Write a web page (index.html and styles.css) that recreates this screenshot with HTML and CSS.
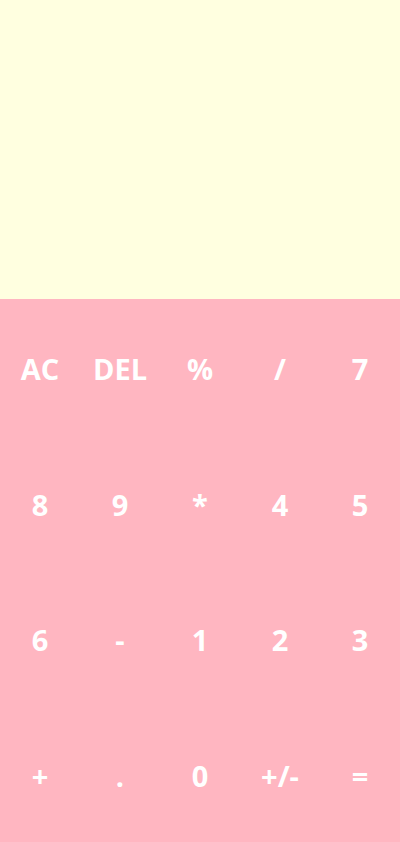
FILE: index.html
```html
<!DOCTYPE html>
<html>
<head>
<meta charset="utf-8">
<link rel="stylesheet" href="styles.css">
</head>
<body>
<div class="calc">
  <div class="display"></div>
  <div class="keys">
    <button class="key">AC</button>
    <button class="key">DEL</button>
    <button class="key">%</button>
    <button class="key">/</button>
    <button class="key">7</button>
    <button class="key">8</button>
    <button class="key">9</button>
    <button class="key">*</button>
    <button class="key">4</button>
    <button class="key">5</button>
    <button class="key">6</button>
    <button class="key">-</button>
    <button class="key">1</button>
    <button class="key">2</button>
    <button class="key">3</button>
    <button class="key">+</button>
    <button class="key">.</button>
    <button class="key">0</button>
    <button class="key">+/-</button>
    <button class="key">=</button>
  </div>
</div>
</body>
</html>
```
FILE: styles.css
```css
html, body {
  margin: 0;
  padding: 0;
  height: 100%;
}
.calc {
  display: flex;
  flex-direction: column;
  height: 842px;
  font-family: "Open Sans", "Noto Sans", sans-serif;
}
.display {
  height: 299px;
  background: #ffffe0;
}
.keys {
  flex: 1;
  display: grid;
  grid-template-columns: repeat(5, 1fr);
  grid-template-rows: repeat(4, 1fr);
  background: #ffb6c1;
}
.key {
  border: none;
  background: transparent;
  color: #fff;
  font-family: inherit;
  font-weight: 700;
  font-size: 29px;
  padding: 3px 0 0;
  margin: 0;
}
```
